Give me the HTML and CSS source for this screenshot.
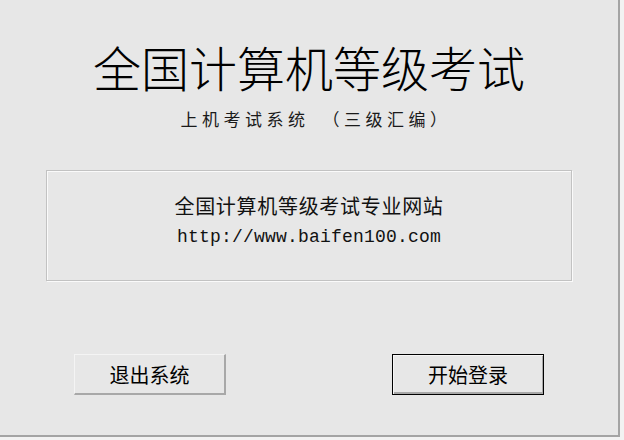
FILE: index.html
```html
<!DOCTYPE html>
<html lang="zh-CN">
<head>
  <meta charset="UTF-8" />
  <title>全国计算机等级考试</title>
  <link rel="stylesheet" href="styles.css">
</head>
<body>
  <div class="window">
    <h1 class="title">全国计算机等级考试</h1>
    <div class="subtitle">上机考试系统　（三级汇编）</div>

    <div class="site-box">
      <div class="site-name">全国计算机等级考试专业网站</div>
      <div class="site-url">http://www.baifen100.com</div>
    </div>

    <div class="actions">
      <button class="btn btn-flat">退出系统</button>
      <button class="btn btn-default">开始登录</button>
    </div>
  </div>
</body>
</html>
```

FILE: styles.css
```css
body {
  margin: 0;
  background-color: #f2f2f2;
  font-family: "Noto Sans CJK SC", "Liberation Sans", sans-serif;
  color: #000;
}

.window {
  width: 618px;
  height: 435px;
  background-color: #e7e7e7;
  border-right: 2px solid #a4a4a4;
  border-bottom: 2px solid #a4a4a4;
  display: flex;
  flex-direction: column;
}

.title {
  margin: 42px 0 0 0;
  font-size: 48px;
  font-weight: 300;
  line-height: 48px;
  text-align: center;
}

.subtitle {
  margin: 20px 0 0 14px;
  font-size: 17px;
  line-height: 17px;
  letter-spacing: 4.5px;
  text-align: center;
  color: #1a1a1a;
}

.site-box {
  margin: 43px 0 0 46px;
  width: 524px;
  height: 109px;
  border: 1px solid #c2c2c2;
  box-shadow: inset 1px 1px 0 #fafafa, 1px 1px 0 #fafafa;
  text-align: center;
  color: #111;
}

.site-name {
  margin-top: 25px;
  font-size: 20px;
  line-height: 20px;
  letter-spacing: 0.7px;
}

.site-url {
  margin-top: 11px;
  font-family: "Liberation Mono", monospace;
  font-size: 18px;
  line-height: 20px;
  letter-spacing: 0.2px;
}

.actions {
  display: flex;
  gap: 166px;
  margin: 73px 0 0 74px;
}

.btn {
  width: 152px;
  height: 41px;
  padding: 0;
  font-family: "Noto Sans CJK SC", sans-serif;
  font-size: 20px;
  color: #000;
  background-color: #e7e7e7;
  box-sizing: border-box;
}

.btn-flat {
  border: none;
  border-top: 1px solid #f4f4f4;
  border-left: 1px solid #f4f4f4;
  border-right: 2px solid #a8a8a8;
  border-bottom: 2px solid #a8a8a8;
}

.btn-default {
  border: 1px solid #000;
  box-shadow: inset 1px 1px 0 #f6f6f6, inset -1px -2px 0 #a8a8a8;
}
```
